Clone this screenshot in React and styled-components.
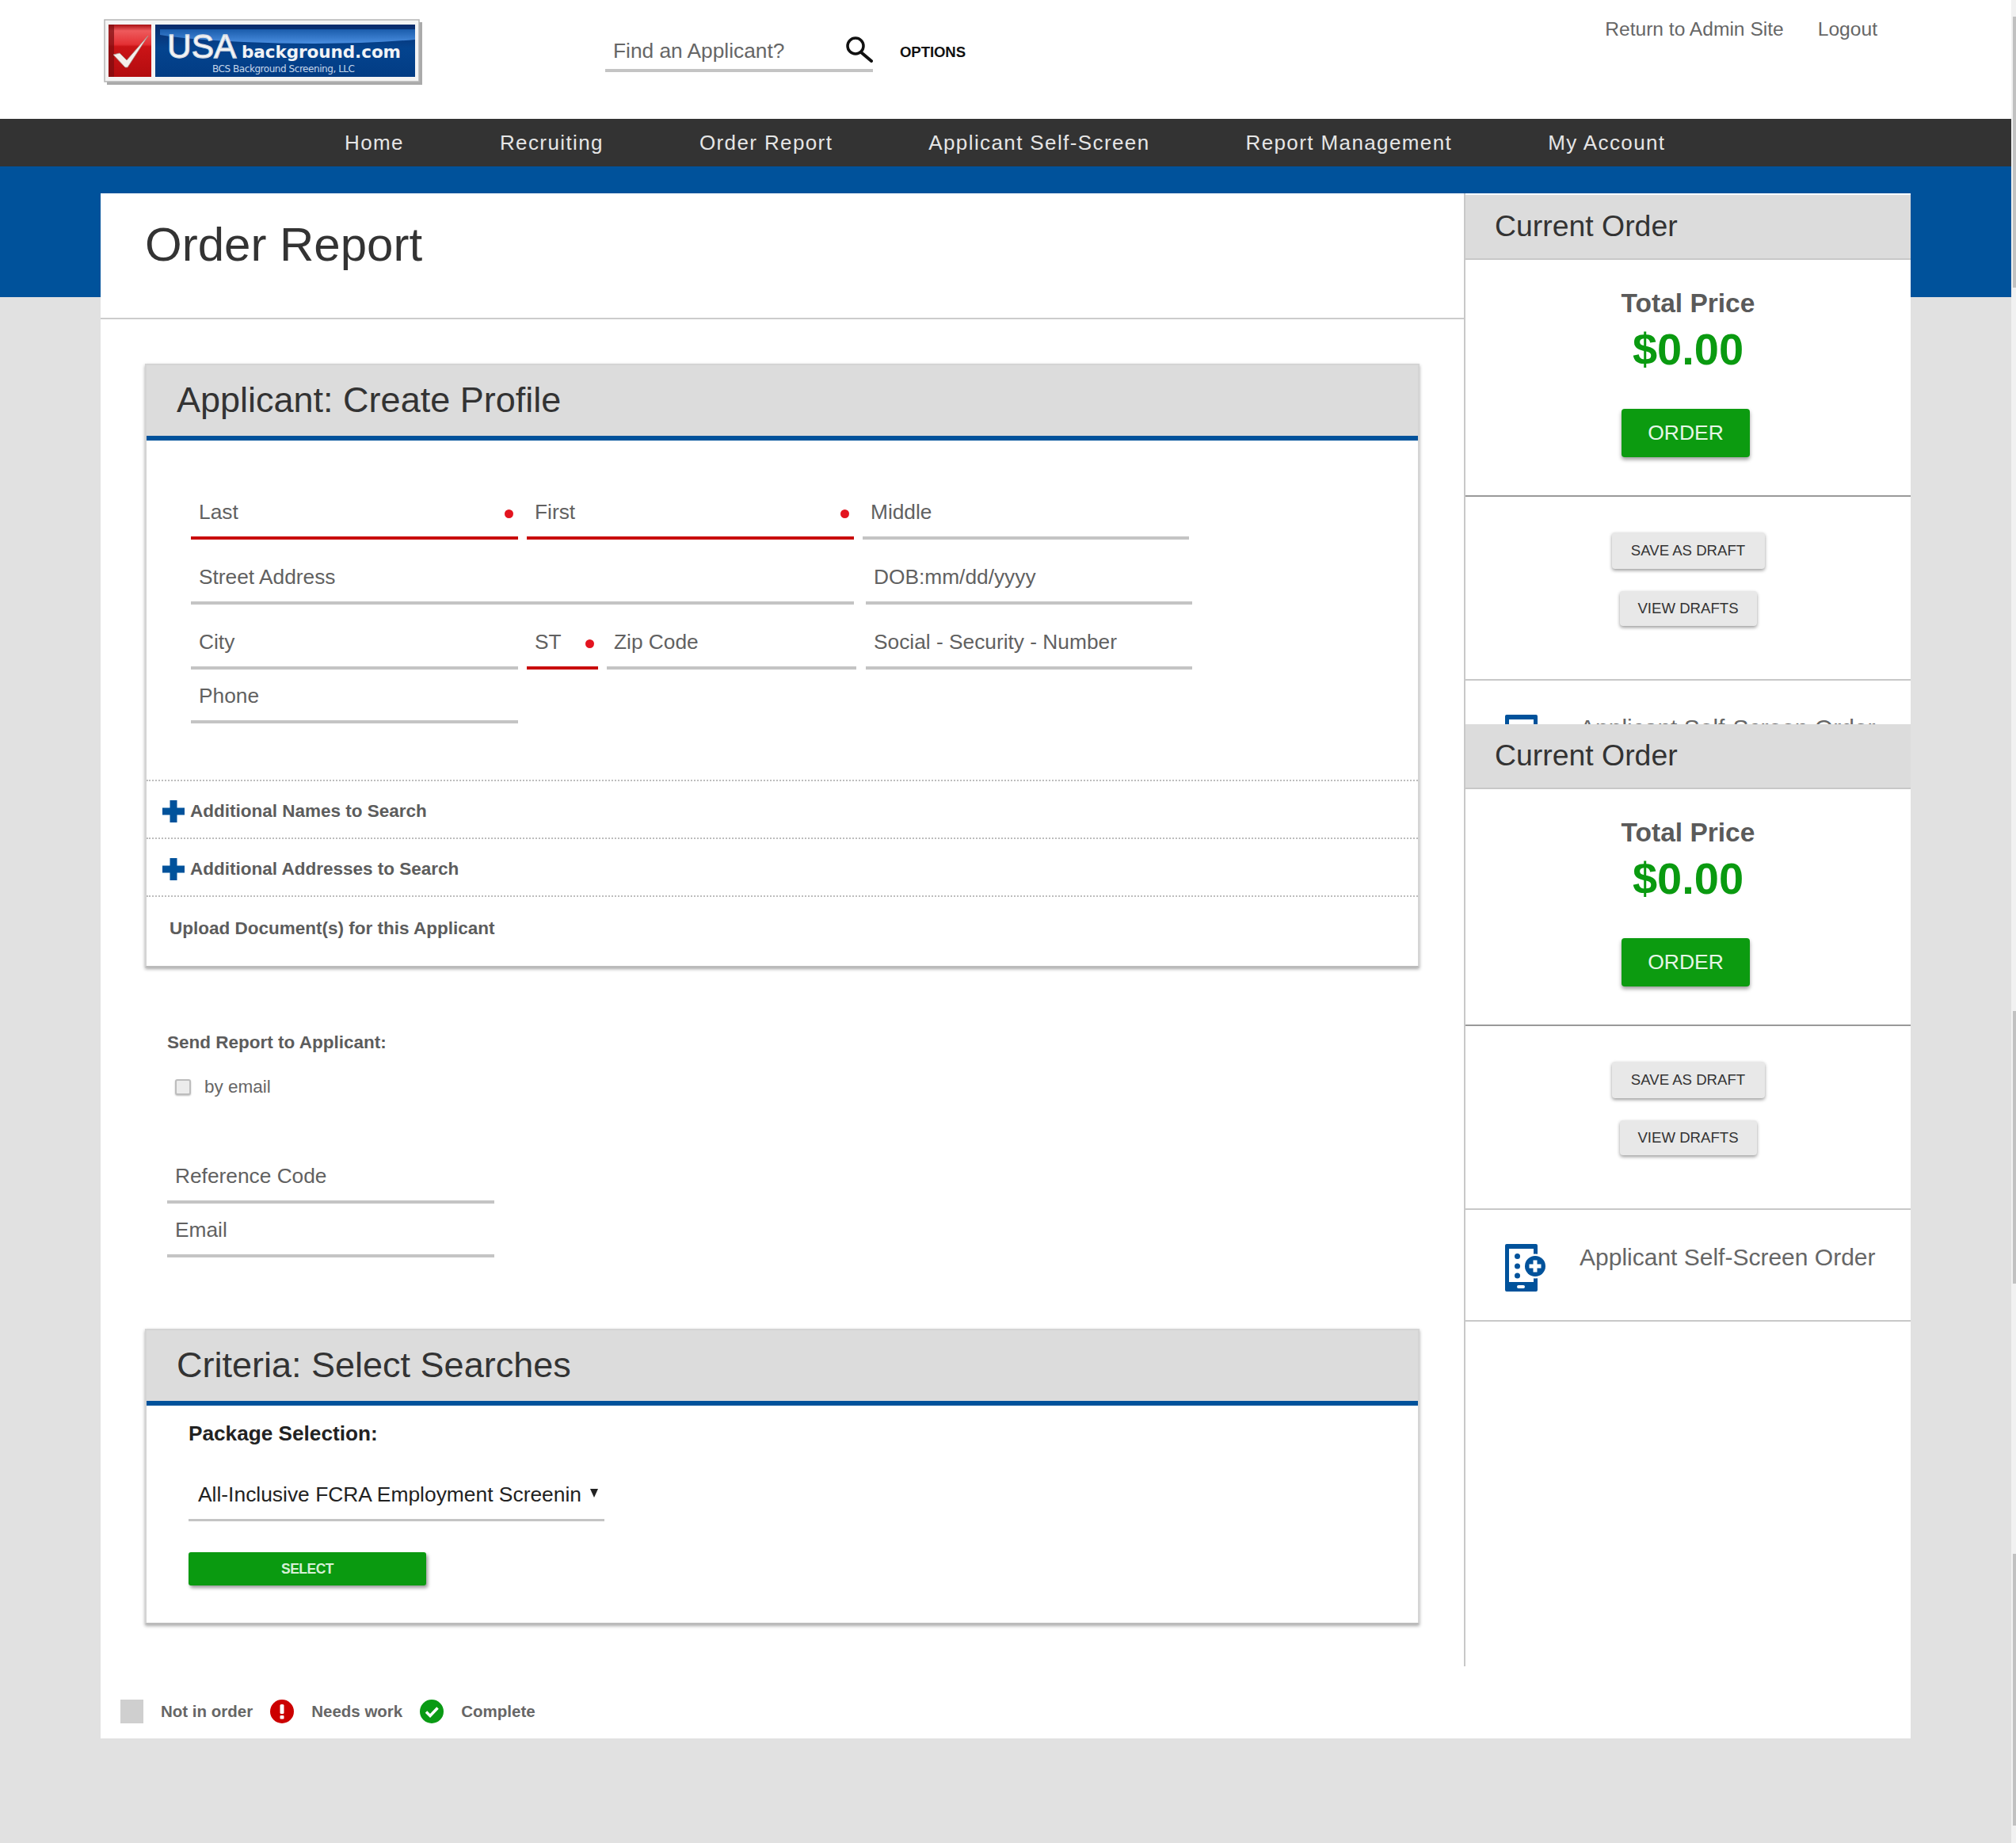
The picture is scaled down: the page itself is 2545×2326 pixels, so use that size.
import React from "react";
import styled, { createGlobalStyle } from "styled-components";

const GlobalStyle = createGlobalStyle`
  html, body {
    margin: 0;
    padding: 0;
    background: #e1e1e1;
  }
  * {
    box-sizing: border-box;
  }
`;

const Root = styled.div`
  display: flex;
  width: 2545px;
  height: 2326px;
  overflow: hidden;
  font-family: "Liberation Sans", Arial, sans-serif;
  color: #5f5f5f;
`;

const Page = styled.div`
  width: 2539px;
  flex: none;
`;

const Scrollbar = styled.div`
  width: 6px;
  padding-left: 2px;
  background: #f1f1f1;
`;

const Thumb = styled.div`
  margin-top: ${(p) => p.$gap}px;
  height: ${(p) => p.$h}px;
  background: #c1c1c1;
`;

const Header = styled.header`
  display: flex;
  align-items: flex-start;
  height: 150px;
  padding: 22px 169px 0 128px;
  background: #fff;
`;

const Search = styled.div`
  display: flex;
  justify-content: space-between;
  width: 338px;
  height: 46px;
  margin: 23px 0 0 226px;
  padding-left: 10px;
  border-bottom: 4px solid #c4c4c4;
  font-size: 26.3px;
  line-height: 38px;
  color: #666;
`;

const SearchIcon = styled.svg`
  width: 35px;
  height: 33px;
  margin-top: 1px;
  flex: none;
`;

const Options = styled.div`
  margin: 33px 0 0 34px;
  font-size: 18.6px;
  line-height: 22px;
  font-weight: 700;
  letter-spacing: -0.1px;
  color: #111;
`;

const TopLinks = styled.div`
  display: flex;
  gap: 43px;
  margin-left: auto;
  font-size: 24.6px;
  line-height: 30px;
  color: #666;
`;

const Nav = styled.nav`
  display: flex;
  align-items: center;
  gap: 121px;
  height: 60px;
  padding-left: 435px;
  background: #333;
`;

const NavItem = styled.a`
  font-size: 26px;
  letter-spacing: 1.39px;
  color: #e6e6e6;
`;

const Stage = styled.div`
  padding: 34px 0 132px 127px;
  background: linear-gradient(#00529b 0 165px, #e1e1e1 165px);
`;

const Panel = styled.div`
  width: 2285px;
  background: #fff;
`;

const Columns = styled.div`
  display: flex;
  align-items: stretch;
`;

const Main = styled.main`
  width: 1721px;
  flex: none;
  padding-bottom: 53px;
`;

const TitleBar = styled.div`
  height: 159px;
  padding: 35px 0 0 56px;
  border-bottom: 2px solid #ccc;
`;

const PageTitle = styled.h1`
  margin: 0;
  font-size: 60px;
  line-height: 60px;
  font-weight: 400;
  color: #333;
`;

const Card = styled.section`
  width: 1609px;
  margin: ${(p) => p.$top}px 0 0 56px;
  background: #fff;
  border: 2px solid #d4d4d4;
  border-bottom-color: #bbb;
  box-shadow: 0 2px 4px rgba(0, 0, 0, 0.35);
`;

const CardHeader = styled.div`
  display: flex;
  align-items: center;
  height: 95px;
  padding: 0 0 1px 38px;
  background: #dcdcdc;
  border-bottom: 6px solid #00529b;
`;

const CardTitle = styled.h2`
  margin: 0;
  font-size: 45px;
  line-height: 50px;
  font-weight: 400;
  color: #333;
`;

const FormGrid = styled.div`
  padding: 75px 0 71px 56px;
`;

const FormRow = styled.div`
  display: flex;
  margin-top: ${(p) => p.$top || 0}px;
`;

const Field = styled.div`
  position: relative;
  width: ${(p) => p.$w}px;
  margin-left: ${(p) => p.$gap || 0}px;
  height: 50px;
  padding-left: ${(p) => p.$pad || 10}px;
  border-bottom: 4px solid ${(p) => (p.$required ? "#c90c0c" : "#c4c4c4")};
  font-size: 26.3px;
  line-height: 30px;
  color: #616161;
`;

const RequiredDot = styled.span`
  position: absolute;
  top: 12px;
  right: ${(p) => p.$right || 6}px;
  width: 11px;
  height: 11px;
  border-radius: 50%;
  background: #e3141f;
`;

const ExtraRow = styled.div`
  display: flex;
  align-items: center;
  height: ${(p) => p.$h}px;
  padding: ${(p) => p.$pt}px 0 ${(p) => p.$pb}px ${(p) => p.$left}px;
  border-top: 2px dotted #bdbdbd;
  font-size: 22.5px;
  font-weight: 700;
  color: #5c5c5c;
`;

const PlusIcon = styled.svg`
  width: 28px;
  height: 28px;
  margin-right: 7px;
  flex: none;
`;

const SendBlock = styled.div`
  margin: 80px 0 0 84px;
`;

const SendLabel = styled.div`
  font-size: 22.5px;
  line-height: 30px;
  font-weight: 700;
  color: #5c5c5c;
`;

const CheckRow = styled.label`
  display: flex;
  align-items: center;
  gap: 17px;
  height: 30px;
  margin: 26px 0 0 10px;
  font-size: 22.5px;
  color: #666;
`;

const CheckBox = styled.span`
  width: 20px;
  height: 20px;
  border: 2px solid #bdbdbd;
  border-radius: 3px;
  background: #ececec;
  box-shadow: 0 1px 2px rgba(0, 0, 0, 0.25);
`;

const RefFields = styled.div`
  margin-top: 82px;
`;

const SelectBody = styled.div`
  padding: 20px 0 47px 53px;
`;

const PackageLabel = styled.div`
  font-size: 26.2px;
  line-height: 30px;
  font-weight: 700;
  color: #222;
`;

const PackageSelect = styled.div`
  display: flex;
  align-items: center;
  width: 525px;
  margin-top: 47px;
  padding: 0 0 16px 12px;
  border-bottom: 3px solid #c4c4c4;
  font-size: 26.4px;
  line-height: 30px;
  color: #222;
  white-space: nowrap;
`;

const Caret = styled.span`
  width: 0;
  height: 0;
  margin: 0 0 4px 11px;
  border-left: 5.5px solid transparent;
  border-right: 5.5px solid transparent;
  border-top: 11px solid #222;
`;

const SelectButton = styled.button`
  display: block;
  width: 300px;
  height: 42px;
  margin-top: 39px;
  padding: 0;
  border: 0;
  border-radius: 3px;
  background: #0a9a10;
  box-shadow: 2px 3px 4px rgba(0, 0, 0, 0.4);
  font-family: inherit;
  font-size: 17.5px;
  font-weight: 700;
  letter-spacing: -0.5px;
  color: #d6f0d6;
`;

const Sidebar = styled.aside`
  flex: 1;
  display: flex;
  flex-direction: column;
`;

const SideCopy = styled.div`
  border-left: 2px solid #c8c8c8;
  ${(p) => (p.$clipped ? "height: 670px; padding-top: 2px; overflow: hidden;" : "flex: 1;")}
`;

const SideHeader = styled.div`
  display: flex;
  align-items: center;
  height: 82px;
  padding: 0 0 1px 37px;
  background: #dcdcdc;
  border-bottom: 2px solid #c8c8c8;
  font-size: 37.4px;
  color: #333;
`;

const PriceBlock = styled.div`
  display: flex;
  flex-direction: column;
  align-items: center;
  padding: 35px 0 48px;
  border-bottom: 2px solid #999;
`;

const PriceLabel = styled.div`
  font-size: 33.5px;
  line-height: 40px;
  font-weight: 700;
  color: #5a5a5a;
`;

const PriceValue = styled.div`
  margin-top: 8px;
  font-size: 56px;
  line-height: 60px;
  font-weight: 700;
  color: #0a9a10;
`;

const OrderButton = styled.button`
  width: 162px;
  height: 61px;
  margin: 45px 6px 0 0;
  padding: 0;
  border: 0;
  border-radius: 4px;
  background: #0c9b10;
  box-shadow: 0 3px 5px rgba(0, 0, 0, 0.4);
  font-family: inherit;
  font-size: 26.5px;
  color: #e6f6e6;
`;

const DraftBlock = styled.div`
  display: flex;
  flex-direction: column;
  align-items: center;
  gap: 28px;
  padding: 45px 0 67px;
  border-bottom: 2px solid #c8c8c8;
`;

const DraftButton = styled.button`
  width: ${(p) => p.$w}px;
  height: ${(p) => p.$h}px;
  padding: 0;
  border: 0;
  border-radius: 4px;
  background: #e8e8e8;
  box-shadow: 0 2px 4px rgba(0, 0, 0, 0.4);
  font-family: inherit;
  font-size: 18.6px;
  color: #333;
`;

const SelfScreenRow = styled.div`
  display: flex;
  align-items: flex-start;
  gap: 43px;
  height: 141px;
  padding: 43px 0 0 50px;
  border-bottom: 2px solid #c8c8c8;
`;

const SelfScreenIcon = styled.svg`
  width: 51px;
  height: 60px;
  flex: none;
`;

const SelfScreenText = styled.div`
  margin-top: -1px;
  font-size: 30px;
  line-height: 36px;
  color: #666;
  white-space: nowrap;
`;

const Legend = styled.div`
  display: flex;
  align-items: center;
  gap: 22px;
  height: 91px;
  padding: 23px 0 0 25px;
  font-size: 20.5px;
  font-weight: 700;
  color: #666;
`;

const LegendSquare = styled.span`
  width: 29px;
  height: 30px;
  background: #cfcfcf;
`;

const LegendIcon = styled.svg`
  width: 30px;
  height: 30px;
  flex: none;
`;

function Logo() {
  return (
    <svg width="410" height="88" viewBox="0 0 410 88">
      <defs>
        <linearGradient id="logoBlue" x1="0" y1="0" x2="0" y2="1">
          <stop offset="0" stopColor="#0a2c6b" />
          <stop offset="0.45" stopColor="#04448f" />
          <stop offset="1" stopColor="#023c84" />
        </linearGradient>
        <linearGradient id="logoGloss" x1="0" y1="0" x2="0" y2="1">
          <stop offset="0" stopColor="#1a5cab" />
          <stop offset="1" stopColor="#4a8ee0" />
        </linearGradient>
        <linearGradient id="logoRed" x1="0" y1="0" x2="0" y2="1">
          <stop offset="0" stopColor="#a81114" />
          <stop offset="0.12" stopColor="#ee5a5c" />
          <stop offset="0.38" stopColor="#e43034" />
          <stop offset="0.42" stopColor="#cb1417" />
          <stop offset="1" stopColor="#b30c0f" />
        </linearGradient>
      </defs>
      <rect x="7" y="6" width="398" height="79" fill="#8e8e8e" opacity="0.75" />
      <rect x="4" y="3" width="397" height="78" fill="#f4f4f4" stroke="#b5b5b5" strokeWidth="1.5" />
      <rect x="9" y="9" width="54" height="66" fill="url(#logoRed)" />
      <rect x="9" y="9" width="7" height="66" fill="#7c0d0f" opacity="0.7" />
      <path d="M15 47l8-2 9 9 27-31-26 40h-3z" fill="#f5efec" stroke="#a8908a" strokeWidth="0.8" />
      <rect x="68" y="9" width="328" height="66" fill="url(#logoBlue)" />
      <path d="M74 15H396V28Q300 36 180 31Q110 28 74 22z" fill="url(#logoGloss)" />
      <text x="83" y="51" fontFamily="Liberation Sans, Arial, sans-serif" fontSize="42.500" fill="#f6f7f9" stroke="#d8dde4" strokeWidth="1.300">USA</text>
      <text x="177" y="51" fontFamily="DejaVu Sans, sans-serif" fontSize="21.500" fontWeight="700" fill="#f1f3f6" textLength="201">background.com</text>
      <text x="140" y="69" fontFamily="DejaVu Sans, sans-serif" fontSize="12" fill="#c6d6ea" textLength="180">BCS Background Screening, LLC</text>
    </svg>
  );
}

function Plus() {
  return (
    <PlusIcon viewBox="0 0 28 28">
      <path d="M9.500 0h9v9.500H28v9h-9.500V28h-9v-9.500H0v-9h9.500z" fill="#00529b" />
    </PlusIcon>
  );
}

function SideContent() {
  return (
    <>
      <SideHeader>Current Order</SideHeader>
      <PriceBlock>
        <PriceLabel>Total Price</PriceLabel>
        <PriceValue>$0.00</PriceValue>
        <OrderButton>ORDER</OrderButton>
      </PriceBlock>
      <DraftBlock>
        <DraftButton $w={193} $h={46}>SAVE AS DRAFT</DraftButton>
        <DraftButton $w={173} $h={44}>VIEW DRAFTS</DraftButton>
      </DraftBlock>
      <SelfScreenRow>
        <SelfScreenIcon viewBox="0 0 51 60">
          <path d="M2 0h37a2 2 0 0 1 2 2v56a2 2 0 0 1-2 2H2a2 2 0 0 1-2-2V2a2 2 0 0 1 2-2zm3 6v42h31V6z" fill="#00529b" fillRule="evenodd" />
          <rect x="15" y="52" width="10" height="4" rx="2" fill="#fff" />
          <circle cx="15.500" cy="15.500" r="3.500" fill="#00529b" />
          <circle cx="15.500" cy="28" r="3.500" fill="#00529b" />
          <circle cx="15.500" cy="40" r="3.500" fill="#00529b" />
          <circle cx="38" cy="28" r="15.500" fill="#fff" />
          <circle cx="38" cy="28" r="13" fill="#00529b" />
          <path d="M35.500 20.500h5v5h5v5h-5v5h-5v-5h-5v-5h5z" fill="#fff" />
        </SelfScreenIcon>
        <SelfScreenText>Applicant Self-Screen Order</SelfScreenText>
      </SelfScreenRow>
    </>
  );
}

function App() {
  return (
    <Root>
      <GlobalStyle />
      <Page>
        <Header>
          <Logo />
          <Search>
            <span>Find an Applicant?</span>
            <SearchIcon viewBox="0 0 35 33">
              <circle cx="13" cy="12" r="10" fill="none" stroke="#111" strokeWidth="3.500" />
              <path d="M20 20l13 11" stroke="#111" strokeWidth="4" strokeLinecap="round" />
            </SearchIcon>
          </Search>
          <Options>OPTIONS</Options>
          <TopLinks>
            <span>Return to Admin Site</span>
            <span>Logout</span>
          </TopLinks>
        </Header>
        <Nav>
          <NavItem>Home</NavItem>
          <NavItem>Recruiting</NavItem>
          <NavItem>Order Report</NavItem>
          <NavItem>Applicant Self-Screen</NavItem>
          <NavItem>Report Management</NavItem>
          <NavItem>My Account</NavItem>
        </Nav>
        <Stage>
          <Panel>
            <Columns>
              <Main>
                <TitleBar>
                  <PageTitle>Order Report</PageTitle>
                </TitleBar>
                <Card $top={56}>
                  <CardHeader>
                    <CardTitle>Applicant: Create Profile</CardTitle>
                  </CardHeader>
                  <FormGrid>
                    <FormRow>
                      <Field $w={413} $required>Last<RequiredDot /></Field>
                      <Field $w={413} $gap={11} $required>First<RequiredDot /></Field>
                      <Field $w={412} $gap={11}>Middle</Field>
                    </FormRow>
                    <FormRow $top={32}>
                      <Field $w={837}>Street Address</Field>
                      <Field $w={412} $gap={15}>DOB:mm/dd/yyyy</Field>
                    </FormRow>
                    <FormRow $top={32}>
                      <Field $w={413}>City</Field>
                      <Field $w={90} $gap={11} $required>ST<RequiredDot $right={5} /></Field>
                      <Field $w={315} $gap={11} $pad={9}>Zip Code</Field>
                      <Field $w={412} $gap={12}>Social - Security - Number</Field>
                    </FormRow>
                    <FormRow $top={18}>
                      <Field $w={413}>Phone</Field>
                    </FormRow>
                  </FormGrid>
                  <ExtraRow $h={73} $pt={5} $pb={0} $left={20}>
                    <Plus />
                    Additional Names to Search
                  </ExtraRow>
                  <ExtraRow $h={73} $pt={4} $pb={0} $left={20}>
                    <Plus />
                    Additional Addresses to Search
                  </ExtraRow>
                  <ExtraRow $h={89} $pt={0} $pb={8} $left={29}>
                    Upload Document(s) for this Applicant
                  </ExtraRow>
                </Card>
                <SendBlock>
                  <SendLabel>Send Report to Applicant:</SendLabel>
                  <CheckRow>
                    <CheckBox />
                    by email
                  </CheckRow>
                  <RefFields>
                    <FormRow>
                      <Field $w={413}>Reference Code</Field>
                    </FormRow>
                    <FormRow $top={18}>
                      <Field $w={413}>Email</Field>
                    </FormRow>
                  </RefFields>
                </SendBlock>
                <Card $top={90}>
                  <CardHeader>
                    <CardTitle>Criteria: Select Searches</CardTitle>
                  </CardHeader>
                  <SelectBody>
                    <PackageLabel>Package Selection:</PackageLabel>
                    <PackageSelect>
                      All-Inclusive FCRA Employment Screenin
                      <Caret />
                    </PackageSelect>
                    <SelectButton>SELECT</SelectButton>
                  </SelectBody>
                </Card>
              </Main>
              <Sidebar>
                <SideCopy $clipped>
                  <SideContent />
                </SideCopy>
                <SideCopy>
                  <SideContent />
                </SideCopy>
              </Sidebar>
            </Columns>
            <Legend>
              <LegendSquare />
              <span>Not in order</span>
              <LegendIcon viewBox="0 0 30 30">
                <circle cx="15" cy="15" r="15" fill="#cc0000" />
                <rect x="12.500" y="6" width="5" height="12" rx="1.500" fill="#fff" />
                <rect x="12.500" y="20" width="5" height="4.500" rx="1" fill="#fff" />
              </LegendIcon>
              <span>Needs work</span>
              <LegendIcon viewBox="0 0 30 30">
                <circle cx="15" cy="15" r="15" fill="#0a9a14" />
                <path d="M8 15.500l5 5 9.500-10" fill="none" stroke="#fff" strokeWidth="3.500" />
              </LegendIcon>
              <span>Complete</span>
            </Legend>
          </Panel>
        </Stage>
      </Page>
      <Scrollbar>
        <Thumb $gap={21} $h={342} />
        <Thumb $gap={913} $h={344} />
        <Thumb $gap={341} $h={343} />
      </Scrollbar>
    </Root>
  );
}

export default App;
